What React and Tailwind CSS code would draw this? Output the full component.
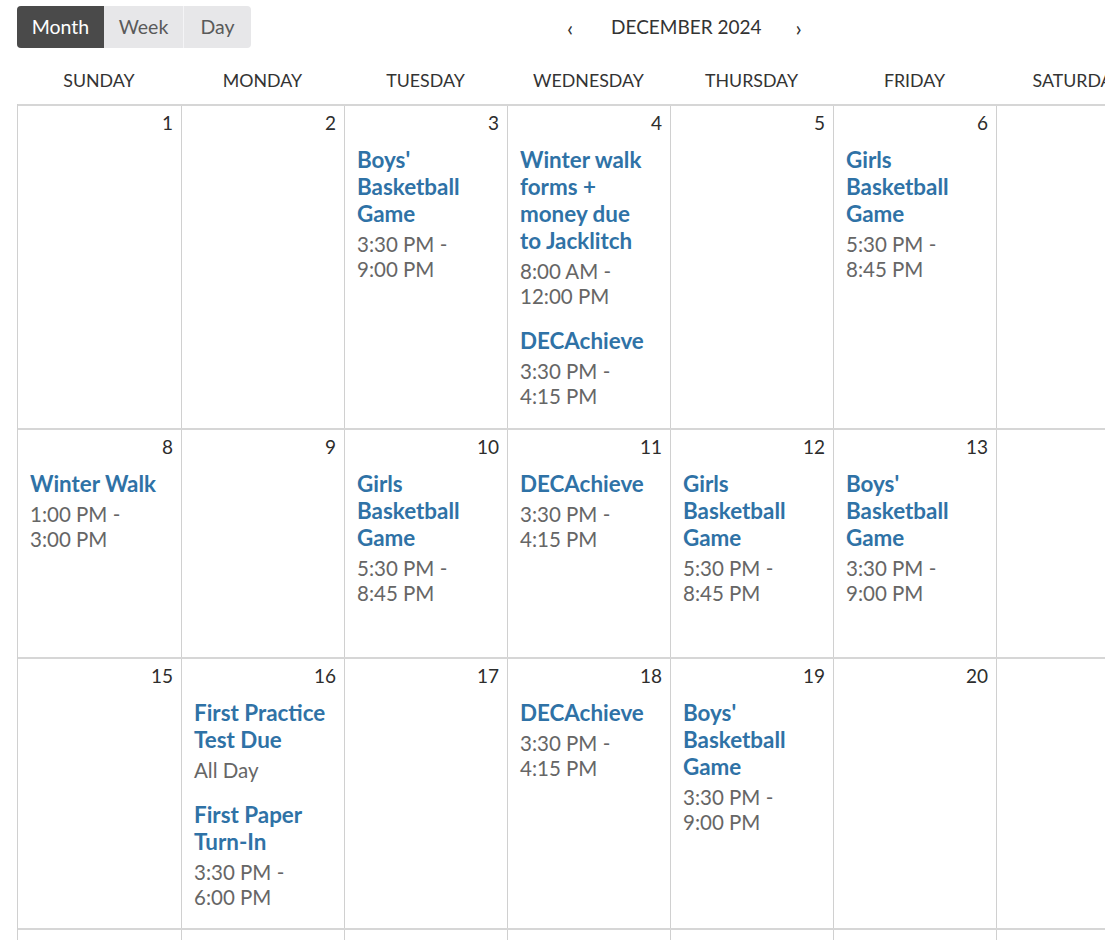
import React from "react";

const days = ["SUNDAY", "MONDAY", "TUESDAY", "WEDNESDAY", "THURSDAY", "FRIDAY", "SATURDAY"];

const basketball = (who, time) => ({ title: `${who} Basketball Game`, time });
const deca = { title: "DECAchieve", time: "3:30 PM - 4:15 PM" };

const weeks = [
  {
    height: "h-[324px]",
    cells: [
      { n: 1 },
      { n: 2 },
      { n: 3, events: [basketball("Boys'", "3:30 PM - 9:00 PM")] },
      {
        n: 4,
        events: [
          { title: "Winter walk forms + money due to Jacklitch", time: "8:00 AM - 12:00 PM" },
          deca,
        ],
      },
      { n: 5 },
      { n: 6, events: [basketball("Girls", "5:30 PM - 8:45 PM")] },
      { n: 7 },
    ],
  },
  {
    height: "h-[229px]",
    cells: [
      { n: 8, events: [{ title: "Winter Walk", time: "1:00 PM - 3:00 PM" }] },
      { n: 9 },
      { n: 10, events: [basketball("Girls", "5:30 PM - 8:45 PM")] },
      { n: 11, events: [deca] },
      { n: 12, events: [basketball("Girls", "5:30 PM - 8:45 PM")] },
      { n: 13, events: [basketball("Boys'", "3:30 PM - 9:00 PM")] },
      { n: 14 },
    ],
  },
  {
    height: "h-[271px]",
    cells: [
      { n: 15 },
      {
        n: 16,
        events: [
          { title: "First Practice Test Due", time: "All Day" },
          { title: "First Paper Turn-In", time: "3:30 PM - 6:00 PM" },
        ],
      },
      { n: 17 },
      { n: 18, events: [deca] },
      { n: 19, events: [basketball("Boys'", "3:30 PM - 9:00 PM")] },
      { n: 20 },
      { n: 21 },
    ],
  },
  {
    height: "h-[200px]",
    cells: [{ n: 22 }, { n: 23 }, { n: 24 }, { n: 25 }, { n: 26 }, { n: 27 }, { n: 28 }],
  },
];

function Event({ event }) {
  return (
    <div className="mb-[18px] pr-[16px]">
      <div className="text-[22.4px] font-bold leading-[27px] text-[#2f72a6]">{event.title}</div>
      <div className="mt-[5px] text-[20.5px] leading-[25px] text-[#666]">{event.time}</div>
    </div>
  );
}

function Cell({ cell }) {
  return (
    <div className="border-r border-[#d0d0d0] pl-[12px]">
      <div className="pr-[8px] pt-[5px] text-right text-[19px] leading-[24px] text-[#2d2d2d]">
        {cell.n}
      </div>
      <div className="mt-[11px]">
        {(cell.events || []).map((e, i) => (
          <Event key={i} event={e} />
        ))}
      </div>
    </div>
  );
}

export default function App() {
  return (
    <div
      className="h-[940px] w-[1105px] overflow-hidden bg-white"
      style={{ fontFamily: "Lato, 'Open Sans', sans-serif" }}
    >
      <div className="w-[1142px] pl-[17px]">
        <div className="flex h-[54px] items-start pt-[6px]">
          <div className="flex h-[42px] overflow-hidden rounded-[4px] bg-[#e7e7e9] text-[19.5px]">
            <button className="w-[87px] bg-[#4a4a4a] text-white">Month</button>
            <button className="w-[80px] border-r border-[#f4f4f6] text-[#5a5a5a]">Week</button>
            <button className="w-[67px] text-[#5a5a5a]">Day</button>
          </div>
          <div className="ml-[316px] flex h-[42px] items-center text-[19px] text-[#333]">
            <span className="w-[44px] text-[22px]">‹</span>
            <span>DECEMBER 2024</span>
            <span className="ml-[34px] text-[22px]">›</span>
          </div>
        </div>
        <div className="grid h-[50px] grid-cols-[164px_repeat(6,163px)] items-center text-center text-[17.8px] text-[#333]">
          {days.map((d) => (
            <div key={d} className="pt-[2px]">{d}</div>
          ))}
        </div>
        <div className="border-l border-[#d0d0d0]">
          {weeks.map((w, i) => (
            <div
              key={i}
              className={`grid grid-cols-[164px_repeat(6,163px)] border-t-2 border-[#d6d6d6] ${w.height}`}
            >
              {w.cells.map((c) => (
                <Cell key={c.n} cell={c} />
              ))}
            </div>
          ))}
        </div>
      </div>
    </div>
  );
}
